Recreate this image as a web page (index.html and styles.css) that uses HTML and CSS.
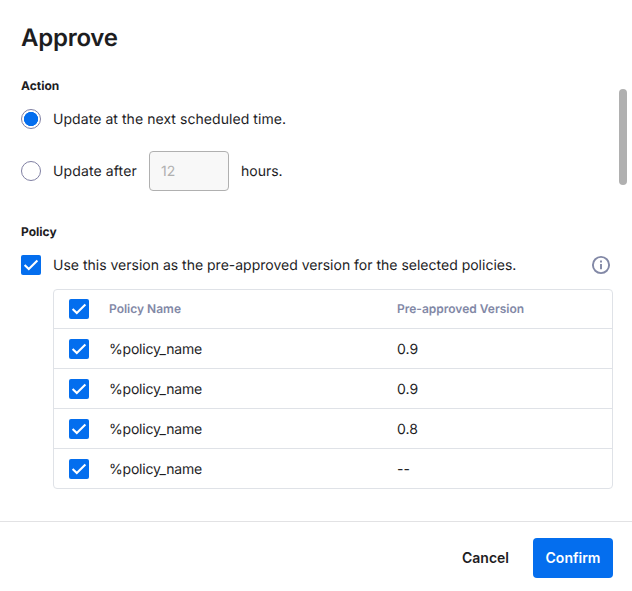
FILE: index.html
```
<!DOCTYPE html>
<html lang="en">
<head>
<meta charset="utf-8">
<title>Approve</title>
<link rel="stylesheet" href="styles.css">
</head>
<body>
<svg class="defs" aria-hidden="true">
  <symbol id="check" viewBox="0 0 20 20"><path d="M3.6 10 7.8 14.1 16.4 5.6"/></symbol>
</svg>
<main class="dialog">
  <h1 class="title"><span>Approve</span></h1>
  <div class="content">
    <h2 class="label"><span>Action</span></h2>
    <div class="option option-first">
      <span class="radio checked"></span><span class="text">Update at the next scheduled time.</span>
    </div>
    <div class="option option-hours">
      <span class="radio"></span><span class="text after">Update after</span>
      <span class="hours-input">12</span><span class="text hours">hours.</span>
    </div>
    <h2 class="label label-policy"><span>Policy</span></h2>
    <div class="option option-policy">
      <svg class="checkbox"><use href="#check"/></svg>
      <span class="text">Use this version as the pre-approved version for the selected policies.</span>
      <svg class="info" viewBox="0 0 20 20"><circle cx="10" cy="10" r="8.1"/><path d="M10 9v5.2M10 5.6v2"/></svg>
    </div>
    <div class="table">
      <div class="row head"><svg class="checkbox"><use href="#check"/></svg><span>Policy Name</span><span>Pre-approved Version</span></div>
      <div class="row"><svg class="checkbox"><use href="#check"/></svg><span class="cell name">%policy_name</span><span class="cell">0.9</span></div>
      <div class="row"><svg class="checkbox"><use href="#check"/></svg><span class="cell name">%policy_name</span><span class="cell">0.9</span></div>
      <div class="row"><svg class="checkbox"><use href="#check"/></svg><span class="cell name">%policy_name</span><span class="cell">0.8</span></div>
      <div class="row"><svg class="checkbox"><use href="#check"/></svg><span class="cell name">%policy_name</span><span class="cell">--</span></div>
    </div>
    <div class="scrollbar"></div>
  </div>
  <footer class="footer">
    <button class="button cancel">Cancel</button>
    <button class="button confirm">Confirm</button>
  </footer>
</main>
</body>
</html>
```
FILE: styles.css
```
* { box-sizing: border-box; }
body {
  margin: 0;
  background: #fff;
  color: #1d1d1f;
  font: 14px/20px Inter, "Liberation Sans", sans-serif;
  text-rendering: geometricPrecision;
}
.defs { display: none; }
.dialog { height: 591px; display: flex; flex-direction: column; overflow: hidden; }
.title { margin: 0; padding: 22px 21px 0; height: 76px; font-size: 24px; line-height: 32px; font-weight: 600; letter-spacing: -0.25px; }
.content { position: relative; height: 445px; padding: 0 19px 0 21px; }
.label { margin: 0; height: 20px; font-size: 12px; line-height: 20px; font-weight: 700; }
.label-policy { margin-top: 31px; }
.option { display: flex; align-items: center; gap: 12px; }
.option-first { height: 20px; margin-top: 13px; letter-spacing: 0.06px; }
.option-hours { height: 40px; margin-top: 22px; }
.option-policy { height: 20px; margin-top: 13px; }
.text { padding-top: 2px; }
.radio { width: 20px; height: 20px; flex: none; border: 1px solid #8080a3; border-radius: 50%; }
.radio.checked { background: radial-gradient(circle, #046eee 6.8px, #fff 7.4px); }
.after { width: 84px; white-space: nowrap; letter-spacing: 0.12px; }
.hours-input { width: 80px; height: 40px; padding: 10px 11px; border: 1px solid #b0b0b0; border-radius: 4px; background: #f8f8f8; color: #b0b0b0; }
.checkbox { display: block; width: 20px; height: 20px; flex: none; border-radius: 2px; background: #046eee; fill: none; stroke: #fff; stroke-width: 2.1; }
.info { width: 20px; height: 20px; margin: 0 2px 0 auto; fill: none; stroke: #8288a6; stroke-width: 1.9; }
.table { margin: 14px 0 0 32px; border: 1px solid #dfe2e7; border-radius: 4px; }
.row { display: grid; grid-template-columns: 40px 288px 1fr; height: 40px; padding: 10px 15px 0; border-bottom: 1px solid #dfe2e7; }
.row:last-child { height: 39px; border-bottom: 0; }
.cell { padding-top: 1px; }
.name { letter-spacing: -0.2px; }
.head { height: 39px; padding-top: 9px; color: #8288a6; font-size: 12px; font-weight: 600; }
.scrollbar { position: absolute; top: 13px; right: 5px; width: 8px; height: 96px; border-radius: 4px; background: #b0b0b0; }
.footer { flex: 1; display: flex; justify-content: flex-end; align-items: flex-start; gap: 12px; padding: 16px 19px 0; border-top: 1px solid #e2e2e4; }
.button { height: 40px; padding: 0 12px; border: 0; border-radius: 4px; background: none; color: inherit; font: inherit; font-weight: 600; }
.confirm { width: 80px; padding: 0; background: #046eee; color: #fff; }
```
